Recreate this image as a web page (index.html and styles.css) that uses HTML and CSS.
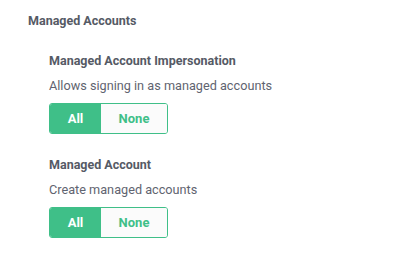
FILE: index.html
```html
<!DOCTYPE html>
<html lang="en">
<head>
    <meta charset="UTF-8">
    <meta name="viewport" content="width=device-width, initial-scale=1.0">
    <title>Managed Accounts</title>
    <link rel="stylesheet" href="styles.css">
</head>
<body>
    <div class="section">
        <h3 class="section-title">Managed Accounts</h3>

        <div class="perm">
            <h4 class="perm-title">Managed Account Impersonation</h4>
            <p class="perm-desc">Allows signing in as managed accounts</p>
            <div class="toggle">
                <button class="toggle-btn active">All</button>
                <button class="toggle-btn">None</button>
            </div>
        </div>

        <div class="perm">
            <h4 class="perm-title">Managed Account</h4>
            <p class="perm-desc">Create managed accounts</p>
            <div class="toggle">
                <button class="toggle-btn active">All</button>
                <button class="toggle-btn">None</button>
            </div>
        </div>
    </div>
</body>
</html>
```

FILE: styles.css
```css
* {
    padding: 0;
    margin: 0;
    box-sizing: border-box;
}

body {
    background-color: #ffffff;
    font-family: Roboto, "Liberation Sans", sans-serif;
}

.section {
    padding: 13px 28px;
}

.section-title {
    font-size: 12.5px;
    font-weight: 700;
    color: #555a65;
    line-height: 16px;
}

.perm {
    padding-left: 21px;
    margin-top: 24px;
}

.perm + .perm {
    margin-top: 23px;
}

.perm-title {
    font-size: 12.5px;
    font-weight: 700;
    color: #555a65;
    line-height: 16px;
}

.perm-desc {
    font-size: 12.7px;
    color: #5f6470;
    line-height: 16px;
    margin-top: 9px;
}

.toggle {
    display: flex;
    width: 119px;
    height: 31px;
    margin-top: 9px;
    border: 1px solid #3fbf88;
    border-radius: 3px;
    overflow: hidden;
}

.toggle-btn {
    border: none;
    outline: none;
    background-color: #fbfbfb;
    color: #3fbf88;
    font-family: Roboto, "Liberation Sans", sans-serif;
    font-size: 13px;
    font-weight: 700;
    flex: 1;
}

.toggle-btn.active {
    flex: 0 0 51px;
    background-color: #3fbf88;
    color: #ffffff;
}
```
